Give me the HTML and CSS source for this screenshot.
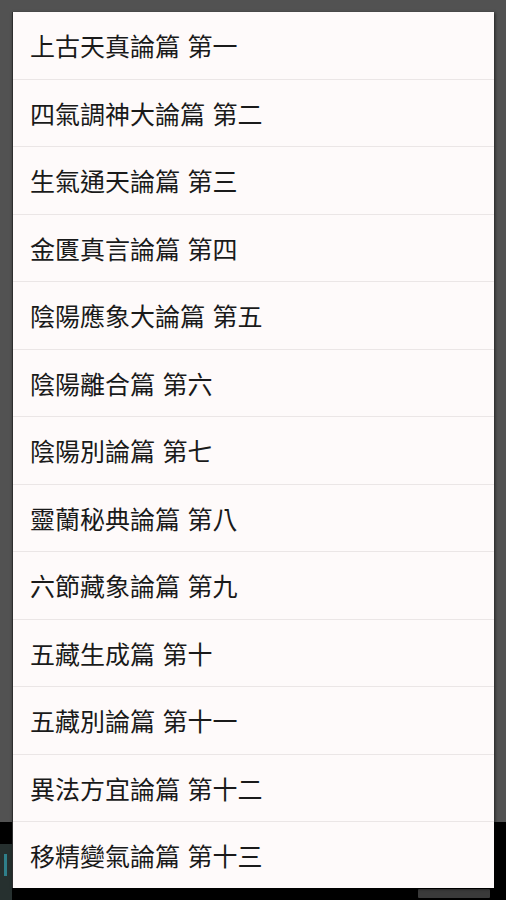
FILE: index.html
```html
<!DOCTYPE html>
<html lang="zh-Hant">
  <head>
    <meta charset="UTF-8" />
    <meta name="viewport" content="width=device-width, initial-scale=1" />
    <title>黃帝內經 素問</title>
    <link rel="stylesheet" href="styles.css">
  </head>
  <body>
    <div class="screen">
      <div class="backdrop"></div>
      <div class="bottom-bar">
        <div class="corner-icon"><span class="stroke"></span></div>
        <div class="menu-key"></div>
      </div>

      <div class="dialog">
        <ul class="chapter-list">
          <li class="chapter">上古天真論篇 第一</li>
          <li class="chapter">四氣調神大論篇 第二</li>
          <li class="chapter">生氣通天論篇 第三</li>
          <li class="chapter">金匱真言論篇 第四</li>
          <li class="chapter">陰陽應象大論篇 第五</li>
          <li class="chapter">陰陽離合篇 第六</li>
          <li class="chapter">陰陽別論篇 第七</li>
          <li class="chapter">靈蘭秘典論篇 第八</li>
          <li class="chapter">六節藏象論篇 第九</li>
          <li class="chapter">五藏生成篇 第十</li>
          <li class="chapter">五藏別論篇 第十一</li>
          <li class="chapter">異法方宜論篇 第十二</li>
          <li class="chapter">移精變氣論篇 第十三</li>
        </ul>
      </div>
    </div>
  </body>
</html>
```

FILE: styles.css
```css
:root {
  --dim: #525252;
  --bar: #000;
  --card: #fefafa;
  --divider: #ebe6e6;
  --text: #1a1a1a;
}
html,
body {
  margin: 0;
  height: 100%;
}
body {
  background: var(--dim);
  font-family: "Noto Sans CJK TC", "Noto Sans", sans-serif;
}
.screen {
  position: relative;
  width: 506px;
  height: 900px;
  display: flex;
  flex-direction: column;
  overflow: hidden;
}
.backdrop {
  flex: 1;
  background: var(--dim);
}
.bottom-bar {
  height: 78px;
  background: var(--bar);
  position: relative;
}
.corner-icon {
  position: absolute;
  left: 0;
  top: 22px;
  width: 12px;
  height: 56px;
  background: #26302f;
}
.corner-icon .stroke {
  display: block;
  margin: 10px 0 0 4px;
  width: 3px;
  height: 22px;
  background: #2f7f8a;
}
.menu-key {
  position: absolute;
  right: 16px;
  bottom: 2px;
  width: 72px;
  height: 9px;
  background: #3a3a3a;
  border-radius: 1px;
}

/* dialog over the dimmed screen */
.dialog {
  position: absolute;
  top: 12px;
  left: 12px;
  width: 482px;
  height: 876px;
  box-sizing: border-box;
  background: var(--card);
  border-left: 1px solid #2e2e2e;
  box-shadow: 1px 1px 3px rgba(0, 0, 0, 0.6);
  overflow: hidden;
}
.chapter-list {
  list-style: none;
  margin: 0;
  padding: 0;
}
.chapter {
  height: 67.5px;
  box-sizing: border-box;
  display: flex;
  align-items: center;
  padding: 0 0 0 17px;
  border-bottom: 1px solid var(--divider);
  font-size: 25px;
  word-spacing: 2px;
  color: var(--text);
  white-space: nowrap;
}
```
